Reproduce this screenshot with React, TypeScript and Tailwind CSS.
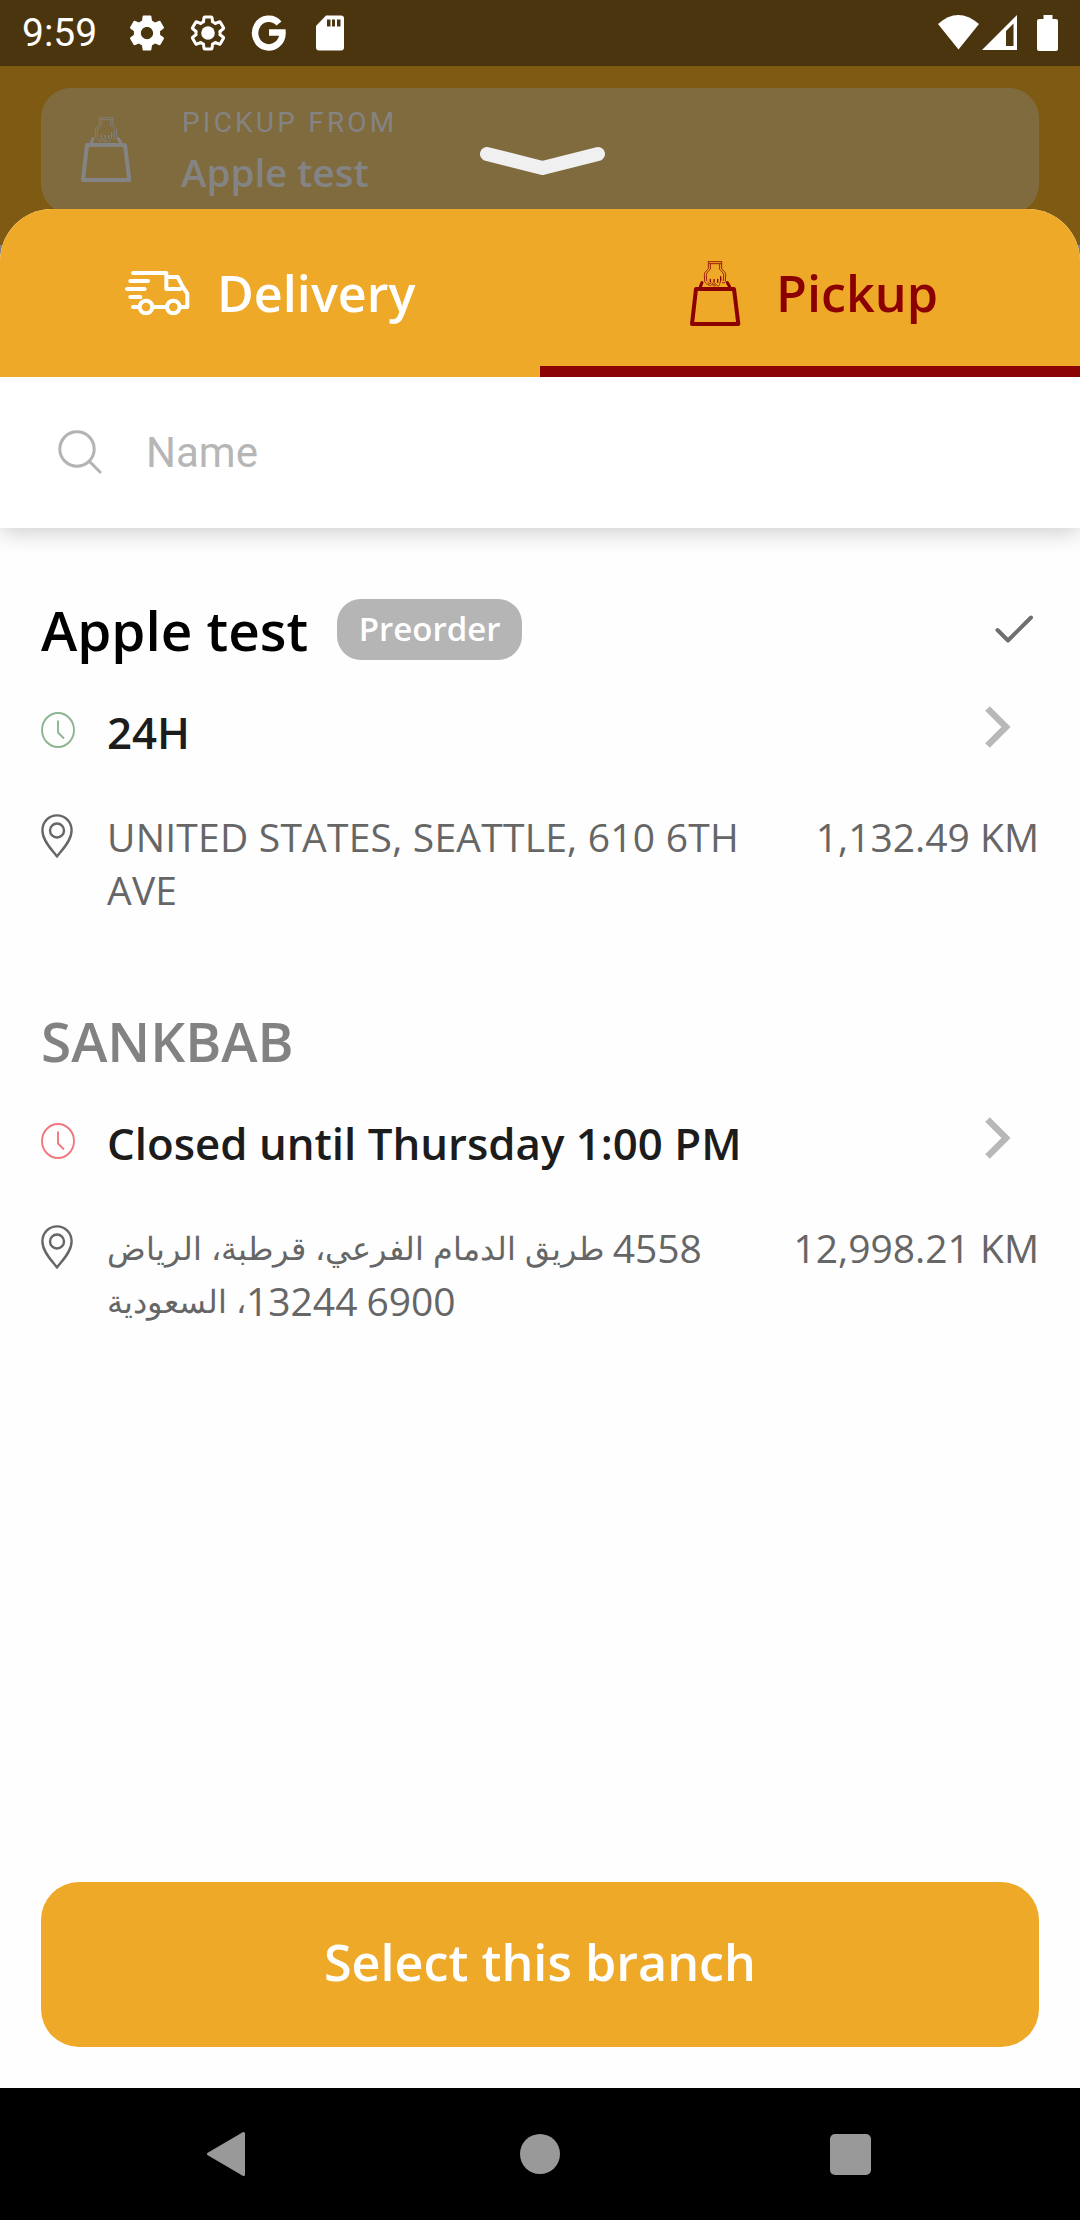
type Branch = {
   name: string;
   nameColor: string;
   preorder: boolean;
   selected: boolean;
   clockColor: string;
   hours: string;
   address: string;
   rtl: boolean;
   distance: string;
};

const branches: Branch[] = [
   {
      name: 'Apple test',
      nameColor: 'text-black',
      preorder: true,
      selected: true,
      clockColor: 'text-[#8db591]',
      hours: '24H',
      address: 'UNITED STATES, SEATTLE, 610 6TH AVE',
      rtl: false,
      distance: '1,132.49 KM',
   },
   {
      name: 'SANKBAB',
      nameColor: 'text-[#828282]',
      preorder: false,
      selected: false,
      clockColor: 'text-[#f07880]',
      hours: 'Closed until Thursday 1:00 PM',
      address: '4558 طريق الدمام الفرعي، قرطبة، الرياض 6900 13244، السعودية',
      rtl: true,
      distance: '12,998.21 KM',
   },
];

const GEAR =
   'M19.43 12.98c.04-.32.07-.64.07-.98s-.03-.66-.07-.98l2.11-1.65c.19-.15.24-.42.12-.64l-2-3.46c-.12-.22-.39-.3-.61-.22l-2.49 1c-.52-.4-1.08-.73-1.69-.98l-.38-2.65C14.46 2.18 14.25 2 14 2h-4c-.25 0-.46.18-.49.42l-.38 2.65c-.61.25-1.17.59-1.69.98l-2.49-1c-.23-.09-.49 0-.61.22l-2 3.46c-.13.22-.07.49.12.64l2.11 1.65c-.04.32-.07.65-.07.98s.03.66.07.98l-2.11 1.65c-.19.15-.24.42-.12.64l2 3.46c.12.22.39.3.61.22l2.49-1c.52.4 1.08.73 1.69.98l.38 2.65c.03.24.24.42.49.42h4c.25 0 .46-.18.49-.42l.38-2.65c.61-.25 1.17-.59 1.69-.98l2.49 1c.23.09.49 0 .61-.22l2-3.46c.12-.22.07-.49-.12-.64l-2.11-1.65z';

const BagIcon = () => (
   <svg viewBox="0 0 180 225" className="w-[60px] h-[75px] shrink-0" fill="none" stroke="currentColor" strokeLinejoin="round" strokeLinecap="round">
      <path d="M33 99H147L160 204H21Z" strokeWidth="12" />
      <path d="M46 92L51 80M134 92L127 80" strokeWidth="9" />
      <g strokeWidth="3" opacity="0.8">
         <path d="M70 17H110M72 23H108M70 17V38C66 44 59 47 58 55L59 77C62 82 66 85 70 86M110 17V38C114 44 121 47 122 55L121 77C119 81 115 82 112 80" />
         <path d="M76 24V40C70 46 64 50 64 58L65 74M104 24V40C109 46 116 50 116 58L115 74" />
         <path d="M70 86C75 90 79 89 81 85C86 92 91 91 93 86C98 92 104 90 104 83L108 72M68 78C72 84 77 84 80 80M82 83C86 87 90 86 92 82" />
      </g>
      <path d="M76 70V77M87 70V79M98 70V79M107 62V72" strokeWidth="4" />
   </svg>
);

const TruckIcon = () => (
   <svg viewBox="0 0 240 180" className="w-[80px] h-[60px] shrink-0 -mt-[6px]" fill="none" stroke="currentColor" strokeWidth="12" strokeLinejoin="round" strokeLinecap="round">
      <path d="M39 39H139V87H181M139 51H173L188 80L202 101V141H182M31 63H84M21 87H74M31 111H61M39 141H56M98 141H138" />
      <circle cx="78" cy="141" r="19" />
      <circle cx="160" cy="141" r="19" />
   </svg>
);

const ClockIcon = () => (
   <svg viewBox="0 0 34 36" className="w-[34px] h-[36px]" fill="none" stroke="currentColor" strokeWidth="1.9">
      <ellipse cx="17" cy="18" rx="16" ry="17" />
      <path d="M17 8.500V20.500L23 26.500" />
   </svg>
);

const PinIcon = () => (
   <svg viewBox="0 0 32 44" className="w-[32px] h-[44px]" fill="none" stroke="currentColor" strokeWidth="2.400" strokeLinejoin="round">
      <path d="M16 42.500C12 37 1.400 27 1.400 16.500C1.400 7.500 8 1.400 16 1.400S30.600 7.500 30.600 16.500C30.600 27 20 37 16 42.500Z" />
      <circle cx="16" cy="16.500" r="7" />
   </svg>
);

const StatusBar = () => (
   <div className="h-[66px] bg-[#4b350f] text-white flex items-center justify-between pl-[22px] pr-[21px]">
      <div className="flex items-center">
         <span className="w-[104px] text-[39px] leading-none font-[Roboto,sans-serif]">9:59</span>
         <svg viewBox="0 0 24 24" className="w-[42px] h-[42px]" fill="currentColor" fillRule="evenodd">
            <path d={GEAR + 'M12 15.500c-1.930 0-3.500-1.570-3.500-3.500s1.570-3.500 3.500-3.500 3.500 1.570 3.500 3.500-1.570 3.500-3.500 3.500z'} />
         </svg>
         <svg viewBox="0 0 24 24" className="w-[42px] h-[42px] ml-[19px]">
            <path d={GEAR} fill="none" stroke="currentColor" strokeWidth="1.900" transform="translate(1 1) scale(.917)" />
            <circle cx="12" cy="12" r="3.900" fill="currentColor" />
         </svg>
         <svg viewBox="0 0 36 36" className="w-[36px] h-[36px] ml-[22px]" fill="none" stroke="currentColor" strokeWidth="6.500">
            <path d="M28 8.500A13.700 14.300 0 1 0 31.500 17.500H18" />
         </svg>
         <svg viewBox="0 0 28 36" className="w-[28px] h-[36px] ml-[29px]" fill="currentColor" fillRule="evenodd">
            <path d="M10 .5H25Q28 .5 28 3.500V32.500Q28 35.500 25 35.500H3Q0 35.500 0 32.500V11ZM11 4.500V11.500H14.500V4.500ZM16 4.500V11.500H19V4.500ZM21 4.500V11.500H24.500V4.500Z" />
         </svg>
      </div>
      <svg viewBox="0 0 122 38" className="w-[122px] h-[38px]" fill="currentColor" fillRule="evenodd">
         <path d="M1 10Q21 -8 42 10L21.500 35.500Z" />
         <path d="M45 36L80 1V36ZM69 17V32H76.500V9.500Z" />
         <path d="M106.500 1H115.500V5H119Q121 5 121 7V35Q121 37 119 37H102Q100 37 100 35V7Q100 5 102 5H106.500Z" />
      </svg>
   </div>
);

// Arabic words run larger than the digits around them, so they get their own size
const Address = ({ text, rtl }: { text: string; rtl: boolean }) => (
   <p
      dir={rtl ? 'rtl' : 'ltr'}
      className={`w-[640px] text-left ${rtl ? '[word-spacing:-1.200px]' : 'tracking-[0.220px]'}`}
   >
      {text.split(/([\u0600-\u06FF]+)/).map((part, index) =>
         index % 2 === 1 ? (
            <span key={index} className="text-[31.500px] leading-none align-[3px]">
               {part}
            </span>
         ) : (
            part
         )
      )}
   </p>
);

const BranchItem = ({ branch }: { branch: Branch }) => (
   <div className="text-[#666666]">
      <div className="h-[61px] flex items-center">
         <h2 className={`text-[54.800px] leading-[61px] font-semibold ${branch.nameColor}`}>{branch.name}</h2>
         {branch.preorder && (
            <span className="ml-[29px] w-[185px] h-[61px] rounded-[24px] bg-[#b5b5b5] text-white text-[33px] leading-[59px] font-semibold text-center">
               Preorder
            </span>
         )}
         {branch.selected && (
            <svg viewBox="0 0 40 30" className="w-[40px] h-[30px] ml-auto mr-[5px] -mt-[1px]" fill="none" stroke="#6f6f6f" strokeWidth="4" strokeLinecap="round" strokeLinejoin="round">
               <path d="M3.500 16L14 26.500L37 3.500" />
            </svg>
         )}
      </div>
      <div className="mt-[42px] h-[60px] flex items-center">
         <span className={`w-[66px] -mt-1 ${branch.clockColor}`}>
            <ClockIcon />
         </span>
         <p className="text-[43.800px] leading-[60px] font-semibold text-[#1c1c1c]">{branch.hours}</p>
         <svg viewBox="0 0 26 42" className="w-[26px] h-[42px] ml-auto mr-[28px] -mt-[10px]" fill="none" stroke="#b8b8b8" strokeWidth="6.500">
            <path d="M2.500 2.500L21 21L2.500 39.500" />
         </svg>
      </div>
      <div className="mt-[48px] h-[106px] flex text-[39px] leading-[53px]">
         <span className="w-[66px] pt-[4px]">
            <PinIcon />
         </span>
         <Address text={branch.address} rtl={branch.rtl} />
         <p className="ml-auto whitespace-nowrap">{branch.distance}</p>
      </div>
   </div>
);

const App = () => {
   return (
      <div className="w-[1080px] h-[2220px] bg-[#808080] flex flex-col overflow-hidden font-['Open_Sans','Noto_Sans',sans-serif]">
         <StatusBar />

         {/* dimmed page behind the sheet */}
         <div className="relative h-[179px] shrink-0 bg-[#7f5a13] px-[41px] pt-[22px]">
            <div className="h-[126px] rounded-[30px] bg-[#806b3f] text-[#848484] flex pl-[35px] pt-[24px]">
               <BagIcon />
               <div className="ml-[45px] -mt-[4px]">
                  <p className="text-[28px] leading-[32px] tracking-[3.200px] font-[Roboto,sans-serif] mt-[-1px] ml-[1px]">PICKUP FROM</p>
                  <p className="text-[38.500px] leading-[52px] font-semibold mt-[7px]">Apple test</p>
               </div>
            </div>
            <svg viewBox="0 0 126 30" className="absolute left-[480px] top-[79px] w-[126px] h-[30px]" fill="none" stroke="#f0f0f0" strokeWidth="14" strokeLinecap="round" strokeLinejoin="round">
               <path d="M7 9L62.500 23L118 9" />
            </svg>
         </div>

         <div className="relative -mt-[36px] flex-1 rounded-t-[52px] overflow-hidden bg-[#fefefe] flex flex-col">
            <div className="relative z-10 grid grid-cols-2 h-[168px] shrink-0 bg-[#eea928] text-[50.300px] font-semibold">
               <button className="flex items-center pl-[120px] text-white">
                  <TruckIcon />
                  <span className="ml-[17px]">Delivery</span>
               </button>
               <button className="flex items-center pl-[145px] pt-[11px] text-[#8b0000] border-b-[11px] border-[#8b0303]">
                  <BagIcon />
                  <span className="ml-[31px]">Pickup</span>
               </button>
            </div>

            <div className="h-[151px] shrink-0 bg-white flex items-center pl-[58px] shadow-[0_4px_22px_rgba(0,0,0,0.2)]">
               <svg viewBox="0 0 44 44" className="w-[44px] h-[44px] -mt-[1px]" fill="none" stroke="#b3b3b3" strokeWidth="3" strokeLinecap="round">
                  <circle cx="19" cy="19" r="17.200" />
                  <path d="M31.500 31.500L42 42" />
               </svg>
               <span className="ml-[44px] text-[42px] font-[Roboto,sans-serif] text-[#b6b6b6]">Name</span>
            </div>

            <div className="flex-1 px-[41px] pt-[71px] flex flex-col gap-[94px]">
               {branches.map((branch) => (
                  <BranchItem key={branch.name} branch={branch} />
               ))}
            </div>

            <button className="mx-[41px] mb-[41px] h-[165px] shrink-0 rounded-[38px] bg-[#eea928] text-white text-[50.300px] font-semibold pb-[6px]">
               Select this branch
            </button>
         </div>

         <div className="h-[132px] shrink-0 bg-black text-[#999999] flex items-center pl-[206px] pr-[209px] justify-between">
            <svg viewBox="0 0 40 46" className="w-[40px] h-[46px]" fill="currentColor" stroke="currentColor" strokeWidth="3" strokeLinejoin="round">
               <path d="M2.500 23L37.500 2.500V43.500Z" />
            </svg>
            <span className="w-[40px] h-[40px] ml-1 rounded-full bg-[#999999]"></span>
            <span className="w-[41px] h-[41px] rounded-[5px] bg-[#999999]"></span>
         </div>
      </div>
   );
};

export default App;
